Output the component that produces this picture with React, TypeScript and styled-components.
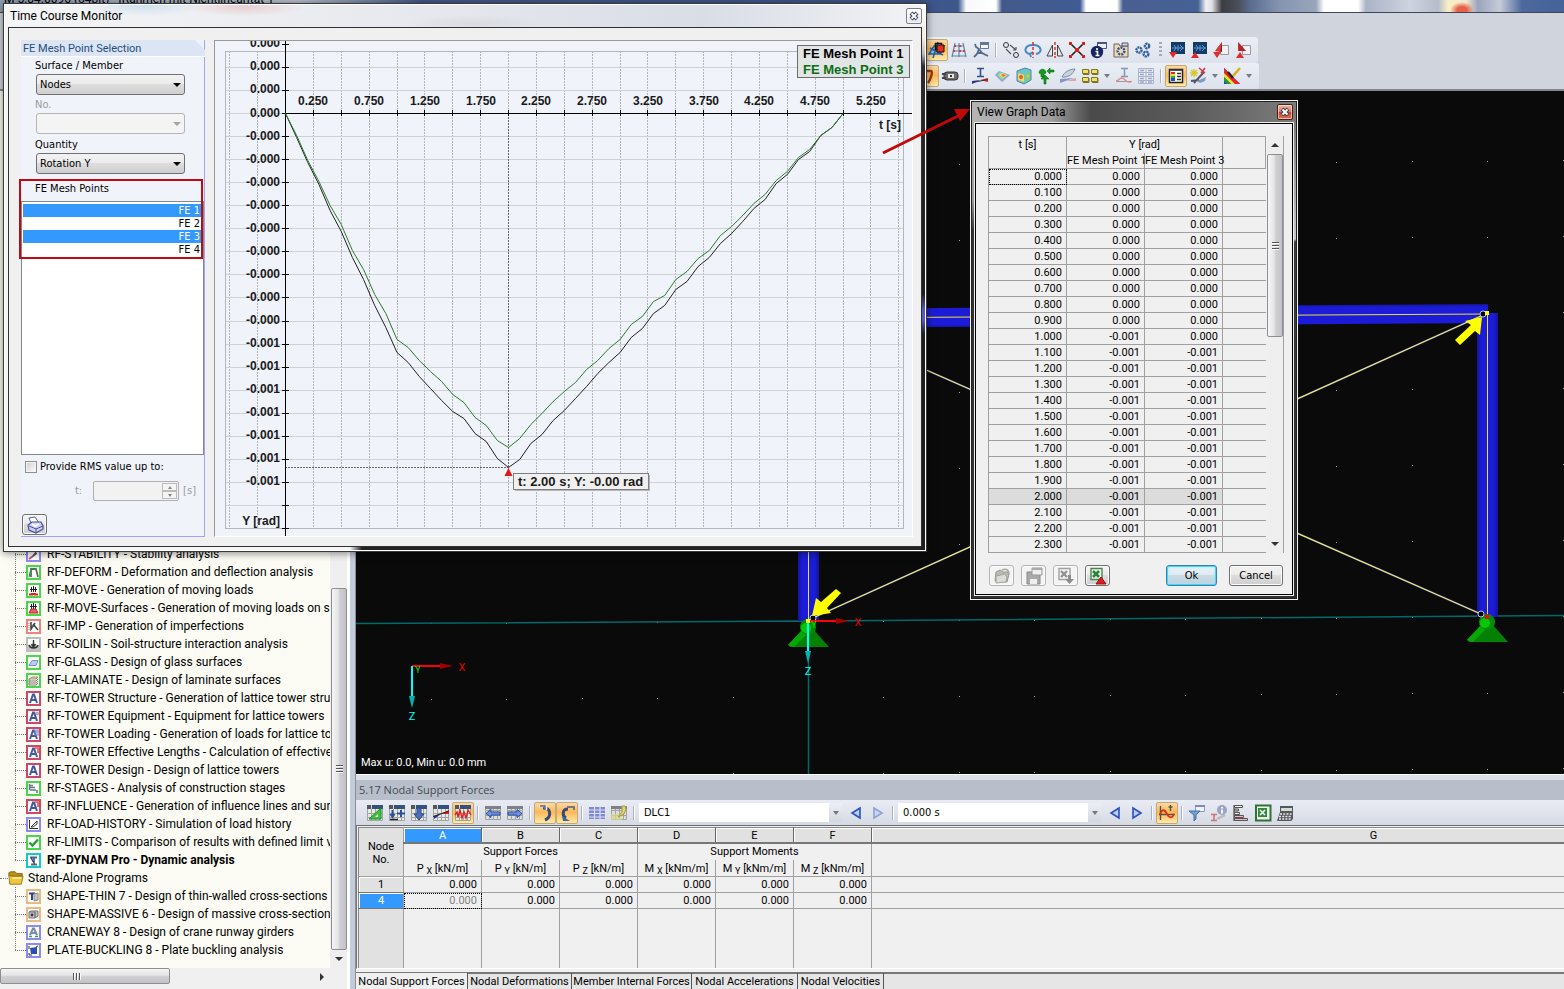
import React from 'react';
import styled, { createGlobalStyle, css } from 'styled-components';

const UI = `Roboto, "Liberation Sans", sans-serif`;
const DIALOG = `"DejaVu Sans Condensed", "Liberation Sans", sans-serif`;
const CHART = `"Liberation Sans", Arial, sans-serif`;

const GlobalStyle = createGlobalStyle`
  * { box-sizing: border-box; }
  body { margin: 0; background: #d0d4dd; overflow: hidden; }
  button, input, select { font: inherit; color: inherit; margin: 0; }
  button { padding: 0; border: 0; background: none; }
`;

/* ---------- shell ---------- */

const Shell = styled.div`
  position: relative;
  display: flex;
  flex-direction: column;
  height: 100vh;
  overflow: hidden;
  font: 12px/18px ${UI};
  color: #000;
  background: #d0d4dd;
`;

const TitleStrip = styled.header`
  flex: none;
  height: 13px;
  overflow: hidden;
  border-bottom: 1px solid #41465a;
  background:
    radial-gradient(ellipse 12px 8px at 1462px 10px, #e8604a 0 40%, transparent 100%),
    linear-gradient(90deg, #8fa0b4 0, #b8c0cc 300px, #44598a 420px, #3d568c 958px, #f8f9fc 966px, #fff 996px, #43598c 1002px,
      #3f5c94 1080px, #fff 1086px, #fff 1117px, #4a5f92 1123px, #456196 1198px, #f0f0f2 1206px, #e0e0e4 1212px, #3c3c40 1222px,
      #4b4f58 1238px, #5a6b90 1250px, #8595b0 1280px, #98a5bc 1316px, #fff 1324px, #fff 1358px, #aab3c6 1366px, #cfd3e0 1410px,
      #b5bccb 1438px, #f6efc4 1448px, #f4e8d0 1466px, #9aa4bc 1478px, #c6cbd8 1500px, #4c689c 1522px, #46639a 1560px);
`;

const AppTitle = styled.h1`
  margin: -10px 0 0 4px;
  font: 12px/18px ${UI};
`;

const ToolArea = styled.div`
  flex: none;
  display: flex;
  flex-direction: column;
  height: 78px;
  padding: 24px 0 0 917px;
  border-bottom: 2px solid #85878a;
`;

const ToolRow = styled.div<{ $lead?: number }>`
  display: flex;
  align-items: center;
  align-self: flex-start;
  height: 26px;
  padding-left: ${p => p.$lead ?? 0}px;
  padding-right: 4px;
  border-radius: 3px;
  background: linear-gradient(#ebeef5, #dce1ec);
`;

const Tool = styled.button<{ $on?: boolean }>`
  flex: none;
  display: flex;
  align-items: center;
  justify-content: center;
  width: 22px;
  height: 22px;
  border: 1px solid transparent;
  ${p => p.$on && css`
    border-color: #c2a978;
    border-radius: 2px;
    background: linear-gradient(#fbd9a5, #fdb85a 45%, #feeaa6);
  `}
`;

const DropArrow = styled.button`
  flex: none;
  width: 12px;
  height: 22px;
  display: flex;
  align-items: center;
  justify-content: center;
  &::after {
    content: '';
    border: 3px solid transparent;
    border-top: 4px solid #777b85;
    border-bottom: 0;
  }
`;

const Sep = styled.i`
  flex: none;
  width: 2px;
  height: 14px;
  margin: 0 3px;
  background: linear-gradient(90deg, #aab0bd 50%, #fff 50%);
`;

const Grip = styled.i`
  flex: none;
  width: 3px;
  height: 16px;
  margin: 0 4px 0 5px;
  background: repeating-linear-gradient(#a3a8b4 0 2px, transparent 2px 4px);
`;

const Body = styled.div`
  flex: 1;
  display: flex;
  min-height: 0;
`;

/* ---------- navigator tree ---------- */

const Navigator = styled.aside`
  flex: none;
  display: grid;
  grid-template: minmax(0, 1fr) 16px / 330px 18px;
  width: 356px;
  padding: 0 0 5px;
  background: linear-gradient(90deg, #f0f0f0 347px, #fff 347px 350px, #c5ccd9 350px 355px, #8a8f99 355px);
`;

const TreePane = styled.nav`
  display: flex;
  flex-direction: column;
  justify-content: flex-end;
  overflow: hidden;
  padding-bottom: 9px;
  background: #fcfcf4;
`;

const Branch = styled.ul`
  position: relative;
  flex: none;
  margin: 0;
  padding: 0 0 0 15px;
  list-style: none;
  &::before {
    content: '';
    position: absolute;
    left: 15px;
    top: 0;
    bottom: 9px;
    border-left: 1px dotted #777;
  }
`;

const Leaf = styled.li<{ $bold?: boolean }>`
  display: flex;
  align-items: center;
  gap: 6px;
  height: 18px;
  white-space: nowrap;
  font-weight: ${p => (p.$bold ? 700 : 400)};
  &::before {
    content: '';
    flex: none;
    width: 11px;
    margin-right: -6px;
    border-top: 1px dotted #777;
  }
`;

const LeafIcon = styled.span<{ $c: string }>`
  flex: none;
  display: flex;
  width: 15px;
  height: 15px;
  border: 2px solid ${p => p.$c};
  background: #fff;
`;

const FolderRow = styled.div`
  flex: none;
  display: flex;
  align-items: center;
  gap: 4px;
  height: 18px;
  &::before {
    content: '';
    width: 8px;
    margin-right: -4px;
    border-top: 1px dotted #777;
  }
`;

const VScroll = styled.div`
  display: flex;
  flex-direction: column;
  justify-content: flex-end;
  width: 16px;
  margin-left: 1px;
  background: #efefef;
`;

const DataScroll = styled(VScroll)`
  flex: none;
  justify-content: flex-start;
`;

const Filler = styled.span`
  flex: 1;
`;

const thumb = css`
  border: 1px solid #8e8e8e;
  border-radius: 2px;
  display: flex;
  align-items: center;
  justify-content: center;
`;

const VThumb = styled.div<{ $h: number }>`
  ${thumb}
  flex: none;
  height: ${p => p.$h}px;
  background: linear-gradient(90deg, #f6f6f6, #e4e4e6 45%, #cfcfd3 55%, #c2c2c8);
  &::after {
    content: '';
    width: 7px;
    height: 8px;
    background: repeating-linear-gradient(#555 0 1px, #fafafa 1px 2px, transparent 2px 3px);
  }
`;

const HScroll = styled.div`
  display: flex;
  align-items: stretch;
  background: #f0f0f0;
`;

const HThumb = styled.div`
  ${thumb}
  width: 170px;
  padding-right: 16px;
  background: linear-gradient(#f6f6f6, #e4e4e6 45%, #cfcfd3 55%, #c2c2c8);
  &::after {
    content: '';
    width: 8px;
    height: 7px;
    background: repeating-linear-gradient(90deg, #555 0 1px, #fafafa 1px 2px, transparent 2px 3px);
  }
`;

const ScrollArrow = styled.button<{ $dir: 'up' | 'down' | 'right' }>`
  flex: none;
  display: flex;
  align-items: center;
  justify-content: center;
  width: 16px;
  height: 18px;
  margin-left: ${p => (p.$dir === 'right' ? 'auto' : '0')};
  &::after {
    content: '';
    border: 4px solid transparent;
    ${p => p.$dir === 'up' && css`border-top: 0; border-bottom-color: #333;`}
    ${p => p.$dir === 'down' && css`border-bottom: 0; border-top-color: #333;`}
    ${p => p.$dir === 'right' && css`border-right: 0; border-left-color: #333;`}
  }
`;

/* ---------- model view ---------- */

const Main = styled.main`
  flex: 1;
  display: flex;
  flex-direction: column;
  min-width: 0;
`;

const ViewPort = styled.section`
  position: relative;
  flex: 1;
  min-height: 0;
  background: #0a0a0a;
`;

const Scene = styled.svg`
  display: block;
  width: 100%;
  height: 100%;
`;

const ViewStatus = styled.p`
  position: absolute;
  left: 5px;
  bottom: 2px;
  margin: 0;
  font: 11px/18px ${UI};
  color: #fff;
`;

/* ---------- results panel ---------- */

const Results = styled.section`
  flex: none;
  display: flex;
  flex-direction: column;
  height: 215px;
  border-top: 1px solid #fff;
  background: #dde0e8;
  padding-top: 5px;
`;

const ResultsTitle = styled.h2`
  margin: 0;
  padding-left: 3px;
  height: 20px;
  font: 11px/20px "Open Sans", sans-serif;
  color: #444b52;
  background: #b9bfca;
`;

const ResultsTools = styled.div`
  flex: none;
  display: flex;
  align-items: center;
  height: 26px;
  padding-left: 8px;
  border-bottom: 1px solid #6c6c6c;
  background: linear-gradient(#e9ecf4, #d6dae4);
`;

const Combo = styled.span`
  position: relative;
  display: flex;
  flex: none;
  width: 203px;
  height: 19px;
  margin: 0 3px 0 1px;
  background: #fff;
  select {
    flex: 1;
    border: 0;
    padding: 0 5px;
    background: transparent;
    appearance: none;
    font: 11px/18px ${DIALOG};
  }
  &::before {
    content: '';
    position: absolute;
    right: 0;
    top: 0;
    width: 13px;
    height: 19px;
    background: linear-gradient(#eceff4, #d3d8e0);
  }
  &::after {
    content: '';
    position: absolute;
    right: 3px;
    top: 8px;
    border: 3px solid transparent;
    border-top: 4px solid #777;
    border-bottom: 0;
  }
`;

const GridWrap = styled.div`
  flex: 1;
  overflow: hidden;
  padding: 1px 0 0 1px;
  background: #f0f0f0;
  border-left: 1px solid #777;
  border-bottom: 1px solid #fff;
`;

const Grid = styled.table`
  table-layout: fixed;
  width: 1518px;
  border-collapse: collapse;
  font: 11px/14px ${UI};
  border-top: 1px solid #888;
  th, td {
    padding: 1px 4px 0;
    height: 16px;
    font-weight: 400;
    border-right: 1px solid #a0a0a0;
    border-bottom: 1px solid #a0a0a0;
    white-space: nowrap;
  }
  td { text-align: right; }
  thead tr:nth-child(2) th { height: 16px; border-bottom-color: transparent; }
  thead tr:nth-child(3) th { height: 17px; }
  tbody tr:last-child td { height: 61px; border-bottom: 0; }
  sub { font-size: 9px; line-height: 9px; vertical-align: -2px; }
`;

const Letter = styled.th<{ $sel?: boolean }>`
  height: 14px !important;
  line-height: 13px;
  border-bottom: 2px solid #777 !important;
  border-right-color: #666 !important;
  box-shadow: inset 1px 1px #fff;
  background: ${p => (p.$sel ? '#3399ff' : '#e1e1e1')};
  color: ${p => (p.$sel ? '#fff' : '#000')};
`;

const Corner = styled.th`
  line-height: 13px;
  background: #e1e1e1;
  border-left: 1px solid #888;
`;

const RowHead = styled.th<{ $sel?: boolean }>`
  box-shadow: inset 1px 1px #fff;
  border-left: 1px solid #888;
  border-bottom-color: #777 !important;
  background: ${p => (p.$sel ? '#3399ff' : '#e1e1e1')};
  color: ${p => (p.$sel ? '#fff' : '#000')};
`;

const EdgeCell = styled.td`
  background: #e1e1e1;
  border-left: 1px solid #888;
`;

const FocusCell = styled.td`
  outline: 1px dotted #000;
  outline-offset: -1px;
  color: #808080;
`;

const Tabs = styled.div`
  flex: none;
  display: flex;
  height: 20px;
  padding-top: 4px;
  background: linear-gradient(#f0f0f0 3px, #777 3px 5px, #e6e6e6 5px);
  font: 11px/18px ${UI};
`;

const Tab = styled.button<{ $on?: boolean; $w: number }>`
  flex: none;
  width: ${p => p.$w}px;
  height: 18px;
  border-right: 1px solid #555;
  background: ${p => (p.$on ? '#f0f0f0' : 'transparent')};
  white-space: nowrap;
`;

/* ---------- time course window ---------- */

const TimeWindow = styled.section`
  position: absolute;
  left: 3px;
  top: 3px;
  width: 924px;
  padding: 0 4px 4px;
  border: 1px solid #3a3a3a;
  background:
    linear-gradient(#fdfdfd, #f3ede2 34px, #bbb 50px, #2c2c2c 62px, #1e1e1e 290px, #5858c0 306px, #5858c0 316px, #1e1e1e 330px) right / 5px 100% no-repeat,
    linear-gradient(90deg, #f6f6f6 346px, #222 358px) left bottom / 100% 5px no-repeat,
    radial-gradient(ellipse 60px 10px at 140px 2px, #cfe0ee, transparent),
    radial-gradient(ellipse 70px 9px at 470px 20px, #d9dbe0, transparent),
    radial-gradient(ellipse 60px 9px at 240px 3px, #e8cfd2, transparent),
    linear-gradient(90deg, #f4f5f6, #e7e9ee 400px, #d9dde6 700px, #f2f3f6);
  box-shadow: inset 0 0 0 1px #fff, 0 1px 8px rgba(0, 0, 0, 0.5);
`;

const WinTitle = styled.header<{ $h: number }>`
  display: flex;
  align-items: center;
  justify-content: space-between;
  height: ${p => p.$h}px;
  padding-left: 2px;
  h2 { margin: 0; font: 12px/18px ${UI}; }
`;

const CloseButton = styled.button<{ $red?: boolean }>`
  display: flex;
  align-items: center;
  justify-content: center;
  width: 16px;
  height: 16px;
  border: 1px solid ${p => (p.$red ? '#4c2018' : '#7d8088')};
  border-radius: 2px;
  background: ${p => (p.$red ? 'linear-gradient(#f0b5a5, #dd7a62 48%, #c5432a 52%, #e0755a)' : 'linear-gradient(#fff, #e4e6ea)')};
  box-shadow: inset 0 0 0 1px rgba(255, 255, 255, 0.5);
`;

const TimeBody = styled.div`
  display: flex;
  gap: 9px;
  height: 520px;
  padding: 12px 8px 9px 12px;
  border: 1px solid #303030;
  background: #f0f0f0;
`;

const SelectionPanel = styled.form`
  position: relative;
  display: flex;
  flex-direction: column;
  width: 184px;
  border-right: 1px solid #a4a4ee;
  border-bottom: 1px solid #a4a4ee;
  background: #f0f3fa;
  font: 11px/14px ${DIALOG};
`;

const PanelTitle = styled.h3`
  margin: 0 -1px 0 0;
  padding-left: 2px;
  height: 17px;
  font: 11px/17px ${UI};
  color: #1f4e80;
  background: #dce5f4;
  border-bottom: 1px solid #fff;
  clip-path: polygon(0 0, 174px 0, 100% 10px, 100% 100%, 0 100%);
`;

const FieldLabel = styled.label<{ $off?: boolean; $top: number }>`
  display: block;
  height: 16px;
  margin: ${p => p.$top}px 0 0 14px;
  line-height: 16px;
  color: ${p => (p.$off ? '#9b9b9b' : '#000')};
`;

const Drop = styled.span<{ $off?: boolean }>`
  position: relative;
  display: flex;
  width: 149px;
  height: 21px;
  margin-left: 15px;
  select {
    flex: 1;
    padding: 0 3px;
    border: 1px solid ${p => (p.$off ? '#b5b5b5' : '#707070')};
    border-radius: 3px;
    appearance: none;
    opacity: 1;
    background: ${p => (p.$off ? '#f4f4f4' : 'linear-gradient(#f2f2f2, #ebebeb 48%, #dddddd 50%, #cfcfcf)')};
  }
  &::after {
    content: '';
    position: absolute;
    right: 4px;
    top: 9px;
    border: 4px solid transparent;
    border-top-color: ${p => (p.$off ? '#a5a5a5' : '#000')};
    border-bottom: 0;
  }
`;

const PointList = styled.ul`
  height: 254px;
  margin: 4px 0 0;
  padding: 2px 1px;
  list-style: none;
  border: 1px solid #828790;
  background: #fff;
  text-align: right;
`;

const PointItem = styled.li<{ $sel?: boolean }>`
  height: 13px;
  padding-right: 2px;
  line-height: 13px;
  background: ${p => (p.$sel ? '#3399ff' : 'transparent')};
  color: ${p => (p.$sel ? '#fff' : '#000')};
`;

const Highlight = styled.div`
  position: absolute;
  left: -2px;
  top: 139px;
  width: 184px;
  height: 80px;
  border: 2px solid #c00a12;
  pointer-events: none;
`;

const CheckLabel = styled.label`
  display: flex;
  align-items: center;
  gap: 3px;
  margin: 5px 0 0 4px;
  input {
    width: 12px;
    height: 12px;
    appearance: none;
    border: 1px solid #8e8f8f;
    background: linear-gradient(135deg, #ccc, #fff);
    box-shadow: inset 0 0 0 1px #f4f4f4;
  }
`;

const SpinRow = styled.div`
  display: flex;
  align-items: center;
  justify-content: flex-end;
  gap: 4px;
  margin: 7px 8px 0 0;
  color: #9b9b9b;
  label { margin-right: 7px; }
`;

const Spin = styled.span`
  display: flex;
  width: 86px;
  height: 20px;
  padding: 1px;
  border: 1px solid #b0b0b0;
  border-radius: 2px;
  background: #f2f2f2;
  input {
    flex: 1;
    min-width: 0;
    border: 0;
    background: transparent;
  }
`;

const SpinButtons = styled.span`
  display: flex;
  flex-direction: column;
  width: 15px;
  button {
    flex: 1;
    display: flex;
    align-items: center;
    justify-content: center;
    border: 1px solid #bbb;
    background: #f4f4f4;
  }
  button::after { content: ''; border: 2px solid transparent; }
  button:first-child::after { border-top: 0; border-bottom: 3px solid #888; }
  button:last-child::after { border-bottom: 0; border-top: 3px solid #888; }
`;

const IconButton = styled.button<{ $off?: boolean }>`
  display: flex;
  align-items: center;
  justify-content: center;
  width: 25px;
  height: 21px;
  border: 1px solid ${p => (p.$off ? '#b4b4b4' : '#707070')};
  border-radius: 3px;
  background: ${p => (p.$off ? '#f4f4f4' : 'linear-gradient(#f4f4f4, #ebebeb 48%, #dcdcdc 50%, #cfcfcf)')};
  box-shadow: inset 0 0 0 1px #fbfbfb;
`;

const PrintSlot = styled.div`
  margin: auto 0 1px 1px;
`;

const ChartFrame = styled.figure`
  flex: 1;
  min-width: 0;
  margin: 0;
  overflow: hidden;
  border-top: 1px solid #999;
  border-left: 1px solid #999;
  border-bottom: 1px solid #fff;
  border-right: 1px solid #fff;
  background: #f0f3fa;
  svg { display: block; }
`;

/* ---------- graph data window ---------- */

const DataWindow = styled.section`
  position: absolute;
  left: 970px;
  top: 100px;
  width: 328px;
  padding: 0 4px 4px;
  border: 1px solid #f2f2f2;
  background:
    linear-gradient(90deg, #b4b4b4, #a0a0a0 80px, #4a4a4a 120px, #5c5c5c 220px, #7c7c7c) top / 100% 22px no-repeat,
    linear-gradient(#7c7c7c 20px, #c8c8c8 138px, #3a3a3a 141px, #2c2c2c) right / 5px 100% no-repeat,
    linear-gradient(#b4b4b4 20px, #9a9a9a 100px, #333 130px) left / 5px 100% no-repeat,
    #333;
  box-shadow: inset 0 0 0 1px #222;
`;

const DataBody = styled.div`
  padding: 12px 8px 8px 12px;
  border: 1px solid #000;
  outline: 1px solid #eee;
  background: #f0f0f0;
`;

const DataArea = styled.div`
  display: flex;
  border-right: 1px solid #a0a0a0;
`;

const DataTable = styled.table`
  flex: 1;
  width: 100%;
  min-width: 0;
  table-layout: fixed;
  border-collapse: collapse;
  border-top: 1px solid #a0a0a0;
  border-left: 1px solid #a0a0a0;
  font: 11px/15px ${UI};
  th, td {
    padding: 0 4px;
    height: 16px;
    font-weight: 400;
    white-space: nowrap;
    border-right: 1px solid #a0a0a0;
    border-bottom: 1px solid #a0a0a0;
  }
  th { padding: 0; }
  th[rowspan] { vertical-align: top; }
  thead tr:first-child th { border-bottom-color: transparent; }
  thead tr:first-child th[rowspan] { border-bottom-color: #a0a0a0; height: 32px; }
  td { text-align: right; }
  td:last-child { border-right: 0; }
`;

const DataRow = styled.tr<{ $hot?: boolean }>`
  td { background: ${p => (p.$hot ? '#dcdcdc' : 'transparent')}; }
  td:last-child { background: transparent; }
  &:first-child td:first-child { outline: 1px dotted #000; outline-offset: -1px; }
`;

const DataButtons = styled.footer`
  display: flex;
  align-items: center;
  gap: 7px;
  margin-top: 12px;
  padding: 0 1px;
  font: 11px/14px ${DIALOG};
`;

const PushButton = styled.button<{ $default?: boolean }>`
  width: ${p => (p.$default ? 51 : 54)}px;
  height: 21px;
  margin-left: ${p => (p.$default ? 'auto' : '5px')};
  border: 1px solid ${p => (p.$default ? '#2f84b3' : '#707070')};
  border-radius: 3px;
  background: linear-gradient(#f2f2f2, #ebebeb 48%, #dddddd 50%, #cfcfcf);
  box-shadow: ${p => (p.$default ? 'inset 0 0 0 1px #4fd0f5, inset 0 0 3px 1px #a8e4fa' : 'inset 0 0 0 1px #fbfbfb')};
  ${p => p.$default && css`background: linear-gradient(#eaf3f8, #dfeaf0 48%, #c9dbe4 50%, #bcd2dd);`}
`;

const Pointer = styled.svg`
  position: absolute;
  left: 880px;
  top: 105px;
  pointer-events: none;
`;

/* ---------- icons ---------- */

const Icon = ({ name, size = 18 }: { name: string; size?: number }) => (
  <svg width={size} height={size} viewBox="0 0 18 18" fill="none" aria-hidden="true">
    {ICONS[name]}
  </svg>
);

const sheet = (
  <>
    <rect x="1" y="1" width="16" height="16" fill="#e8e8e4" />
    <path d="M1.500 5v11.500h15V5M1 9.500h16M1 13.500h16M5.500 5v12M9.500 5v12M13.500 5v12" stroke="#a4a49e" />
    <path d="M1 1h16v4H1z" fill="#34527e" />
    <path d="M1 1h4v4H1z" fill="#55565a" />
    <path d="M5.500 1v4" stroke="#cdd6e4" />
  </>
);
const palSheet = (
  <>
    <rect x="1" y="2" width="16" height="14" fill="#dededa" />
    <path d="M1.500 2.500h15v13h-15zM1 6.500h16M1 11.500h16M5.500 2v14M9.500 2v14M13.500 2v14" stroke="#a2a29e" />
    <path d="M1 2h16v3H1z" fill="#7d8088" />
  </>
);
const screen = (
  <>
    <rect x="3" y="1" width="14" height="12" fill="#143a68" />
    <path d="M6 4l2 3-2 3M10 4v6M12 4l3 3-3 3M4 7h12" stroke="#5aa0d8" />
  </>
);

const ICONS: Record<string, React.ReactNode> = {
  workplane: <><path d="M1 13l5-8h10l-4 8zM10 1L5 17M2 7l13 7" stroke="#27609a" strokeWidth="1.500" fill="#8cbfe0" /><path d="M7.500 2.500h6v6h-6z" stroke="#111" strokeWidth="1.600" /><path d="M9 4h7v7H9z" fill="#e8301f" stroke="#111" /></>,
  mesh: <><path d="M5 2L2 16M9 2v14M13 2l3 14M4 5h10M3 10h12M2 15h14" stroke="#5c88a8" strokeWidth="1.200" /><path d="M4 4h2v2H4zM9 4h2v2H9zM3 9h2v2H3zM9 9h2v2H9zM13 9h2v2h-2z" fill="#d04040" /></>,
  tree: <><path d="M3 3l1 3 3 2-2 5-3 3M7 8l3 4 6 3M5 12l5 0" stroke="#51698e" strokeWidth="1.800" /><path d="M8.500 1.500h8v6h-8z" fill="#f6f6f6" stroke="#66789a" /><path d="M8 1h9v3H8z" fill="#66789a" /></>,
  move: <><circle cx="4" cy="4" r="2.500" stroke="#333" /><circle cx="14" cy="14" r="2.500" stroke="#333" /><path d="M4 8l5 5M8 4l6 5m0 0V6m0 3h-3" stroke="#555" strokeWidth="1.200" /></>,
  rotate: <><path d="M6 13C-1 12 0 4 9 4s10 8 3 9M7 16l-1-3 3-2" stroke="#4b86c4" strokeWidth="2" /><path d="M9 1v3m0 2v3m0 2v3m0 2v1" stroke="#d22" strokeWidth="1.400" /></>,
  mirror: <><path d="M6.500 4v11H1zM11.500 4v11H17z" stroke="#444" /><path d="M9 1v3m0 2v3m0 2v3m0 1v2" stroke="#d22" strokeWidth="1.400" /></>,
  cross: <><path d="M3 3l12 12M15 3L3 15" stroke="#222" strokeWidth="1.600" /><path d="M1 1h3v3H1zM14 1h3v3h-3zM1 14h3v3H1zM14 14h3v3h-3zM7 7h4v4H7z" fill="#d8201c" /></>,
  info: <><path d="M7.500 1.500h9v6h-9z" fill="#eef" stroke="#4a5680" /><path d="M7 1h10v2H7z" fill="#4a5680" /><circle cx="7" cy="11" r="6.200" fill="#17255e" /><path d="M7 7v2M5.500 10.500H7.500v4M5.500 14.500h4" stroke="#fff" strokeWidth="1.600" /></>,
  gearbox: <><path d="M2 3h5l1 2h8v11H2z" fill="#ecd9b8" stroke="#6c6456" /><path d="M10 2h6v3h-6z" fill="#cfd9ea" stroke="#556" /><circle cx="9" cy="10" r="3.400" stroke="#33538e" strokeWidth="2.400" strokeDasharray="2 1" /></>,
  gears: <g stroke="#34609c" strokeWidth="2.400" strokeDasharray="2 .6"><circle cx="5" cy="9" r="2.600" /><circle cx="13" cy="5" r="2.200" /><circle cx="12" cy="13" r="2.400" /></g>,
  scrDown1: <>{screen}<path d="M1 11h8l-4 6z" fill="#e02a2a" /></>,
  scrUp1: <>{screen}<path d="M1 17h8l-4-6z" fill="#e02a2a" /></>,
  redIn: <><path d="M8.500 4.500h8v9h-8z" fill="#f2f2f2" stroke="#99a" /><path d="M10 1v10l-6-2z" fill="#9c1820" /><path d="M10 1L3 10l5 1z" fill="#d83a3a" /><path d="M1 11h8l-4 6z" fill="#d83030" /></>,
  redOut: <><path d="M8.500 4.500h8v9h-8z" fill="#f2f2f2" stroke="#99a" /><path d="M4 1l8 9H4z" fill="#d83a3a" /><path d="M4 1l1 9 7 0z" fill="#9c1820" opacity=".6" /><path d="M2 17h8l-4-6z" fill="#d83030" /></>,
  bend: <><path d="M4 4h8c2 0 0 8-3 12" stroke="#9a3a12" strokeWidth="2.400" /><path d="M5 5v4" stroke="#333" strokeWidth="2" /></>,
  plug: <><rect x="3" y="5" width="14" height="8" rx="3" fill="#6d6d6d" stroke="#333" /><path d="M1 7h4M1 11h4" stroke="#444" strokeWidth="2" /><path d="M7 7h6v4H7z" fill="#e8e8e8" /><path d="M9 8h2v2H9z" fill="#333" /></>,
  section: <><path d="M6 1.500h7M9.500 2v7M6 9.500h7" stroke="#2d5286" strokeWidth="1.600" /><path d="M1 17v-3l8-1z" fill="#2638c0" /><path d="M9 13l8-2v4z" fill="#e02a2a" /><path d="M1 15.500l16-3" stroke="#333" /></>,
  surface: <><path d="M2 8l4-4 11 4-8 7z" fill="#8aa4e0" /><path d="M4 8l3-3 8 3-6 5z" fill="#8fd8a0" /><path d="M6 8l3-2 5 2-4 3z" fill="#f2dc66" /><path d="M8 8l2-1 3 1-3 2z" fill="#e87845" /></>,
  solid: <><path d="M2 4l8-3 6 2v10l-7 4-7-3z" fill="#6cc6c8" stroke="#4d86a8" /><path d="M3 6l6 2v7l-6-2z" fill="#f0d860" /><circle cx="6" cy="10" r="2" fill="#e4582e" /><path d="M10 8l5-3v7l-5 3z" fill="#7bd07c" /><circle cx="13" cy="9" r="1.500" fill="#e8c040" /></>,
  support: <><path d="M2 6c0-5 7-5 7 0L7 7v3H4V7zM10 4l3-3v2h4v2h-4v2zM8 8l4 4H9v5H7v-5H4z" fill="#129a20" stroke="#08700f" strokeWidth=".6" /></>,
  feather: <><path d="M3 10c2-5 8-8 13-8-2 5-6 8-11 8z" fill="#c6d2de" stroke="#7d8c9c" /><path d="M1 12v4l14-5" fill="#8a93c8" /><path d="M8 14l9-3v3z" fill="#e0a0a0" /></>,
  blocks: <g fill="#f2df6c" stroke="#7d7428"><path d="M1.500 2.500h6v4h-6zM10.500 2.500h6v4h-6zM1.500 10.500h6v4h-6zM10.500 10.500h6v4h-6z" /><path d="M2 7.500h6V3M11 7.500h6V3M2 15.500h6V11M11 15.500h6V11" fill="none" /></g>,
  section2: <><path d="M6 1.500h7M9.500 2v7M6 9.500h7" stroke="#7f99b6" strokeWidth="1.500" /><path d="M1 14.500h16" stroke="#999" /><path d="M1 14c3 0 3-3 6-3s3 5 9 4" stroke="#e08a8a" strokeWidth="1.400" /></>,
  cells: <><path d="M1.500 1.500h15v15h-15zM9 1v16M1 5.500h16M1 9.500h16M1 13.500h16" stroke="#a9b2c8" fill="#e8ebf4" /><path d="M3 3.500h4M11 3.500h4M3 7.500h4M11 7.500h4M3 11.500h4M11 11.500h4M3 15h4M11 15h4" stroke="#9aa8cc" strokeWidth="1.600" /></>,
  legend: <><path d="M2.500 2.500h13v13h-13z" fill="#fff" stroke="#222" strokeWidth="1.500" /><path d="M4 5h4v2H4z" fill="#e22" /><path d="M4 7h4v2H4z" fill="#ed2" /><path d="M4 9h4v2H4z" fill="#2b2" /><path d="M4 11h4v3H4z" fill="#24d" /><path d="M2 3h14M10 6.500h4M10 9.500h4M10 12.500h4" stroke="#333" strokeWidth="1.400" /></>,
  wand: <><path d="M5 2v8M1 6h8M2 3l6 6M8 3L2 9" stroke="#d8c830" strokeWidth="1.500" /><path d="M15 5L5 16M2 14l8-1" stroke="#556" strokeWidth="2" /><path d="M10 1l6 5M16 1l-4 5" stroke="#d34" strokeWidth="1.600" /><path d="M8 14l9-4-1 4-5 2z" fill="#7a9cc8" /></>,
  rainbow: <><path d="M1 1v16h16z" fill="#2448d0" /><path d="M1 1l16 16h-5L1 6z" fill="#e22" /><path d="M1 6l11 11H8L1 10z" fill="#f5e02a" /><path d="M1 10l7 7H4l-3-3z" fill="#1c9c34" /><path d="M10 9l7-8" stroke="#d8b020" strokeWidth="2.600" /><path d="M5 5l5 6" stroke="#222" strokeWidth="2.200" /></>,
  gTri: <>{sheet}<path d="M3 15L15 4v11z" fill="#3fc13f" stroke="#1c8c24" /><path d="M9 13l3-3v3z" fill="#e8e8e4" /></>,
  gPlus: <>{sheet}<path d="M4.500 6v7m-2-3l2 3 2-3M9 9.500h8M13 6v7" stroke="#2b4fa0" strokeWidth="2" /><path d="M2 15.500h8" stroke="#222" strokeWidth="1.400" /></>,
  gDown: <>{sheet}<path d="M7 4h4v6h3l-5 6-5-6h3z" fill="#4a72c0" stroke="#2b4480" /></>,
  gLine: <>{sheet}<path d="M2 15v-3l7-2z" fill="#2030b0" /><path d="M9 10l8-4v4z" fill="#d22" /><path d="M1 12.500L17 7" stroke="#222" /></>,
  gWave: <>{sheet}<path d="M1 11l2-3 1 5 2-7 2 8 2-6 2 6 2-8 3 5" stroke="#e0221c" strokeWidth="1.400" /></>,
  gLeft: <>{palSheet}<path d="M2 9.500l5-4v2.500h9v3H7v2.500z" fill="#6f92e0" stroke="#2c4aa4" /></>,
  gRight: <>{palSheet}<path d="M16 9.500l-5-4v2.500H2v3h9v2.500z" fill="#6f92e0" stroke="#2c4aa4" /></>,
  hookR: <><path d="M7 4c8-1 9 9 2 12" stroke="#3a4a78" strokeWidth="3" /><path d="M3 2h7v4" stroke="#e8e8e8" strokeWidth="2.600" /><path d="M4 2h5v4" stroke="#666" strokeWidth="1.400" /></>,
  hookL: <><path d="M10 5c-6 0-6 7-2 9" stroke="#3a4a78" strokeWidth="3" /><path d="M4 12l8 5-7 0z" fill="#3a66b0" /><path d="M9 3h7v3" stroke="#777" strokeWidth="2" /></>,
  gBlue: <><path d="M1 3h16v12H1z" fill="#8088d0" /><path d="M1 6h16M1 9.500h16M1 13h16M6.500 2v14M12 2v14" stroke="#dcdff4" strokeWidth="1.200" /></>,
  gEdit: <>{palSheet}<path d="M1 10h11v6H1z" fill="#d9dc88" opacity=".7" /><path d="M8 13l4-5V2h3l1 3-2 5z" fill="#e2d668" stroke="#a49c50" /></>,
  prev: <path d="M13 4v10L5 9z" fill="#b8cdf4" stroke="#2c50b8" strokeWidth="1.600" />,
  next: <path d="M5 4v10l8-5z" fill="#b8cdf4" stroke="#2c50b8" strokeWidth="1.600" />,
  nextOff: <path d="M5 4v10l8-5z" fill="#c8d6f4" stroke="#8ba2d6" strokeWidth="1.600" />,
  sine: <><path d="M2.500 2v14M1 10.500h16M12.500 1v6M10.500 3h4" stroke="#554" strokeWidth="1.400" /><path d="M2 10c3-6 5-4 7 0s5 5 7 0" stroke="#e0301c" strokeWidth="1.800" /></>,
  funnel: <><path d="M7.500 1.500h9v6h-9z" stroke="#8c9ac0" fill="#eef1f8" /><path d="M7 1h10v2H7z" fill="#7c8ab4" /><path d="M1 7h11L8 11v4l-2 2v-6z" fill="#6f9edc" stroke="#446ea8" /></>,
  link: <><circle cx="12" cy="6" r="5" fill="#9aa4c4" /><path d="M12 3v1.500M12 5.500v4" stroke="#fff" strokeWidth="1.800" /><path d="M4 10.500v6M1 10.500h6M1 16.500h6" stroke="#c77" strokeWidth="1.600" /><path d="M7 15l8-4" stroke="#bbb" strokeWidth="2.400" /></>,
  bars: <><path d="M2 1v16" stroke="#333" /><path d="M2.500 1.500h8v2h-8zM2.500 8.500h5v2h-5z" fill="#dfe" stroke="#555" /><path d="M2.500 5h4v2h-4zM2.500 11.500h9v2h-9zM2.500 14.500h13v2h-13z" fill="#f0b8b8" stroke="#555" /></>,
  excel: <><path d="M2 1.500h14.500v15H2z" fill="#f4faf2" stroke="#2a7434" strokeWidth="2" /><path d="M4 4h9v9H4z" fill="#2f8a3c" /><path d="M6 6l5 5M11 6l-5 5" stroke="#fff" strokeWidth="1.600" /></>,
  calc: <><path d="M4 2h13v13l-2 2H1L4 8z" fill="#55585e" /><path d="M5 4h11v3H5z" fill="#cfe0d0" /><path d="M4 10h12M3 12.500h12M3 15h12" stroke="#e8e8e8" strokeWidth="1.400" strokeDasharray="2 1.200" /></>,
  folder: <><path d="M1 6V3l2-1h5l2 2h6v3H1z" fill="#b98f14" stroke="#856310" /><path d="M1 6l1 10h13l2-9H4z" fill="#ecc63c" stroke="#98741a" /><path d="M5 9h10" stroke="#fbe994" strokeWidth="2" /></>,
  openOff: <><path d="M2 14l1-9 4-2 3 2h4l2 2-2 8z" fill="#bcbcb6" stroke="#96968f" /><path d="M3 9l9-2 2 3-1 5-10 1z" fill="#dcdcd6" stroke="#a2a29c" /><path d="M9 3c4-2 7 0 7 4" stroke="#a8a8a2" strokeWidth="1.600" /></>,
  saveOff: <><path d="M2 5h13v12H2z" fill="#aaa" stroke="#888" /><path d="M5 12h7v5H5z" fill="#eee" /><path d="M7 1h10v7H7z" fill="#eee" stroke="#999" /><path d="M7 1h10v2H7z" fill="#aaa" /></>,
  excelOff: <><path d="M2 1.500h11v11H2z" fill="#f4f4f4" stroke="#a0a0a0" strokeWidth="1.400" /><path d="M4 4l6 6M10 4l-6 6" stroke="#909090" strokeWidth="2.400" /><path d="M11 8v4H8l4.500 5 4.500-5h-3V8z" fill="#8c8c8c" /></>,
  excelUp: <><path d="M2 1.500h11v11H2z" fill="#f2faf0" stroke="#4a8452" strokeWidth="1.400" /><path d="M4 4l6 6M10 4l-6 6" stroke="#2a8438" strokeWidth="2.600" /><path d="M12 10l5 7H7z" fill="#e0201c" stroke="#901018" /></>,
  printer: <><path d="M5 7L3 2l6-1 4 6z" fill="#fff" stroke="#5060a0" /><path d="M2 9l4-3 9 0 2 4v3l-7 4-7-3z" fill="#cfd2ee" stroke="#4a4f94" strokeWidth="1.200" /><path d="M3 10l7 3 7-3M10 13v3" stroke="#4a4f94" /><path d="M6 8l3 2 4-2" stroke="#fff" strokeWidth="1.600" /></>,
};

const CloseGlyph = () => (
  <svg width="10" height="10" viewBox="0 0 10 10" aria-hidden="true">
    <path d="M2 2l6 6M8 2L2 8" stroke="#3f4656" strokeWidth="4" />
    <path d="M2.500 2.500l5 5M7.500 2.500l-5 5" stroke="#fff" strokeWidth="1.800" />
  </svg>
);

type Glyph = 'stab' | 'deform' | 'move' | 'moves' | 'imp' | 'soil' | 'glass' | 'lam' | 'A' | 'Ax' | 'Ab' | 'Ar' | 'stages' | 'hist' | 'ok' | 'dyn' | 'thin' | 'mass' | 'crane' | 'plate';

const towerA = <path d="M2 10L5 1.500h1L9 10M3 7h5" stroke="#44599a" strokeWidth="2" />;
const GLYPHS: Record<Glyph, React.ReactNode> = {
  stab: <><path d="M1 10l4-3" stroke="#c55" strokeWidth="2" /><path d="M4 7l4-5 1 3-4 3z" fill="#556" /></>,
  deform: <><path d="M3 10V2h5l2 8" stroke="#666" strokeWidth="1.800" /><path d="M1 10l2-8M4 1.500l5 1" stroke="#293" strokeWidth="1.200" /></>,
  move: <><path d="M5.500 1v6M2 4.500h7M3.500 2v5M7.500 2v5" stroke="#222" /><path d="M1 9.500h3V8M10 9.500H7V8M4 9h3" stroke="#d22" strokeWidth="1.800" /></>,
  moves: <><path d="M5.500 0v6M2 3.500h7M3.500 1v5M7.500 1v5" stroke="#222" /><path d="M1 10l2-4h5l2 4z" fill="#d66" stroke="#b22" /></>,
  imp: <><path d="M3 1v7l4-6M5 3l5 6" stroke="#444" strokeWidth="1.600" /><path d="M1 2v7" stroke="#d55" strokeDasharray="1 1" /></>,
  soil: <><path d="M0 6h11v5H0z" fill="#c4c4c4" /><path d="M5.500 1v6M3.500 5l2 3 2-3M1 6c1 4 8 4 9 0" stroke="#333" strokeWidth="1.400" /></>,
  glass: <path d="M1 8.500l3-5h6l-2 5z" fill="#b8d0ee" stroke="#7a90b8" />,
  lam: <><path d="M1 4l3-2h6L8 4z" fill="#f2cc68" stroke="#997" /><path d="M1 6h7l2-2M1 8h7l2-2M1 10h7l2-2M1 4v6" stroke="#776" /></>,
  A: towerA,
  Ax: <>{towerA}<circle cx="9" cy="2.500" r="1.500" fill="#bbb" stroke="#777" strokeWidth=".6" /></>,
  Ab: <>{towerA}<path d="M7 1h4v5H7zM9 1v5M7 3h4" stroke="#7c8ed0" /></>,
  Ar: <>{towerA}<path d="M7 1h3v5" stroke="#e05040" strokeWidth="1.600" /></>,
  stages: <path d="M1.500 1v6M1 2.500h4M2 4.500h5M2 7h6M9 7v3" stroke="#678" strokeWidth="1.500" />,
  hist: <path d="M1.500 1v8.500H10M3 8l6-6v3L5 8z" stroke="#333" />,
  ok: <path d="M1.500 5.500L4.500 8.500 10 2.500" stroke="#1fa32a" strokeWidth="2.400" />,
  dyn: <><path d="M2 2.500h7M6 2v7M3 9.500h6" stroke="#567" strokeWidth="1.800" /><path d="M3 3c2 1 0 3 3 4" stroke="#339" strokeWidth="1.400" /></>,
  thin: <><path d="M1 2.500h6M4 3v6" stroke="#347" strokeWidth="2" /><path d="M6 3l4-1v7l-4 1z" fill="#c5c5c5" stroke="#888" /></>,
  mass: <><path d="M1 3h6v6H1zM1 3l2-1h7v5L7 9V3" fill="#c4c4c4" stroke="#777" /><circle cx="4" cy="6" r="1.400" fill="#335" /></>,
  crane: <><path d="M2 8L5 1.500h1L9 8M3.500 6h4" stroke="#7a8aa0" strokeWidth="2" /><path d="M1 9.500h3M7 9.500h3" stroke="#2a5" strokeWidth="1.600" /></>,
  plate: <><path d="M2 3l7-1v7l-6 0z" fill="#2c50b0" /><path d="M1 1v3M1 8v2h3M10 1L8 2" stroke="#334" /></>,
};

const LEAVES: [string, string, Glyph][] = [
  ['RF-STABILITY - Stability analysis', '#8b8bf4', 'stab'],
  ['RF-DEFORM - Deformation and deflection analysis', '#4ad64a', 'deform'],
  ['RF-MOVE - Generation of moving loads', '#4ad64a', 'move'],
  ['RF-MOVE-Surfaces - Generation of moving loads on surfaces', '#4ad64a', 'moves'],
  ['RF-IMP - Generation of imperfections', '#f58080', 'imp'],
  ['RF-SOILIN - Soil-structure interaction analysis', '#bcbcbc', 'soil'],
  ['RF-GLASS - Design of glass surfaces', '#4ad64a', 'glass'],
  ['RF-LAMINATE - Design of laminate surfaces', '#4ad64a', 'lam'],
  ['RF-TOWER Structure - Generation of lattice tower structures', '#cc4866', 'A'],
  ['RF-TOWER Equipment - Equipment for lattice towers', '#cc4866', 'Ax'],
  ['RF-TOWER Loading - Generation of loads for lattice towers', '#cc4866', 'Ab'],
  ['RF-TOWER Effective Lengths - Calculation of effective lengths', '#cc4866', 'Ar'],
  ['RF-TOWER Design - Design of lattice towers', '#cc4866', 'A'],
  ['RF-STAGES - Analysis of construction stages', '#4ad64a', 'stages'],
  ['RF-INFLUENCE - Generation of influence lines and surfaces', '#cc4866', 'Ar'],
  ['RF-LOAD-HISTORY - Simulation of load history', '#8b8bf4', 'hist'],
  ['RF-LIMITS - Comparison of results with defined limit values', '#4ad64a', 'ok'],
  ['RF-DYNAM Pro - Dynamic analysis', '#10cccc', 'dyn'],
];
const PROGRAMS: [string, string, Glyph][] = [
  ['SHAPE-THIN 7 - Design of thin-walled cross-sections', '#e8ba88', 'thin'],
  ['SHAPE-MASSIVE 6 - Design of massive cross-sections', '#e8ba88', 'mass'],
  ['CRANEWAY 8 - Design of crane runway girders', '#8b8bf4', 'crane'],
  ['PLATE-BUCKLING 8 - Plate buckling analysis', '#8b8bf4', 'plate'],
];

const Leaves = ({ items }: { items: [string, string, Glyph][] }) => (
  <Branch>
    {items.map(([text, color, glyph]) => (
      <Leaf key={text} $bold={text.startsWith('RF-DYNAM')}>
        <LeafIcon $c={color}>
          <svg width="11" height="11" viewBox="0 0 11 11" fill="none" aria-hidden="true">{GLYPHS[glyph]}</svg>
        </LeafIcon>
        {text}
      </Leaf>
    ))}
  </Branch>
);

/* ---------- chart ---------- */

const X0 = 285.5;
const Y0 = 113.5;
const STEP_X = 27.88;
const STEP_Y = 23.06;
const POINT_1 = [113, 137, 162, 184, 210, 231, 257, 279, 305, 327, 352, 362, 376, 388, 400, 411, 418, 433, 441, 458, 467,
  459, 443, 434, 420, 410, 398, 386, 373, 362, 352, 337, 328, 313, 305, 289, 281, 266, 257, 243, 233, 221, 208, 199, 183, 174, 159, 151, 135, 127, 113];
const POINT_3 = [113, 135, 160, 181, 205, 224, 250, 269, 294, 313, 339, 347, 360, 371, 381, 394, 402, 417, 425, 440, 447,
  438, 424, 413, 401, 391, 382, 369, 360, 348, 339, 324, 316, 301, 295, 279, 271, 258, 250, 235, 226, 215, 203, 194, 180, 171, 157, 149, 135, 127, 113];
const toPoints = (ys: number[]) => ys.map((y, i) => `${X0 + i * 11.152},${y + 0.5}`).join(' ');
const snap = (n: number) => Math.round(n - 0.5) + 0.5;

const Chart = () => (
  <svg width="697" height="496" viewBox="215 41 697 496" role="img" aria-label="Rotation Y over time" fontFamily={CHART} fontWeight="700" fontSize="12" fill="#1a1a1a">
    {Array.from({ length: 25 }, (_, i) => snap(X0 + (i - 2) * STEP_X)).map(x => (
      <path key={x} d={`M${x} 51V528`} stroke="#b3b6b8" strokeDasharray="2 1" />
    ))}
    {Array.from({ length: 21 }, (_, i) => snap(Y0 + (i - 2) * STEP_Y)).map(y => (
      <path key={y} d={`M225 ${y}H903`} stroke="#cfd2d4" />
    ))}
    <rect x="225.5" y="51.5" width="678" height="477" fill="none" stroke="#b4b7ba" />
    <path d="M508.500 114V467M285 467.500H508" stroke="#666" strokeDasharray="2 1" />
    <path d={`M${X0} 41V537M285 ${Y0}H912`} stroke="#000" />
    {Array.from({ length: 22 }, (_, i) => snap(Y0 + (i - 3) * STEP_Y)).map(y => (
      <path key={y} d={`M282 ${y}h7`} stroke="#000" />
    ))}
    {Array.from({ length: 22 }, (_, i) => snap(X0 + (i + 1) * STEP_X)).map(x => (
      <path key={x} d={`M${x} 110v6`} stroke="#000" />
    ))}
    {Array.from({ length: 20 }, (_, i) => (
      <text key={i} x="280" y={Math.round(Y0 + (i - 3) * STEP_Y) + 3} textAnchor="end">
        {i < 4 ? '0.000' : i < 13 ? '-0.000' : '-0.001'}
      </text>
    ))}
    {Array.from({ length: 11 }, (_, i) => (
      <text key={i} x={Math.round(X0 + (1 + 2 * i) * STEP_X)} y="105" textAnchor="middle">{(0.25 + i * 0.5).toFixed(3)}</text>
    ))}
    <polyline points={toPoints(POINT_1)} fill="none" stroke="#222" />
    <polyline points={toPoints(POINT_3)} fill="none" stroke="#2a7d2a" />
    <text x="901" y="129" textAnchor="end">t [s]</text>
    <text x="280" y="525" textAnchor="end">Y [rad]</text>
    <rect x="797.5" y="45.5" width="112" height="32" fill="#e2e5e6" stroke="#6a6d6d" />
    <g fontSize="13">
      <text x="803" y="58" fill="#000">FE Mesh Point 1</text>
      <text x="803" y="74" fill="#0c6c14">FE Mesh Point 3</text>
      <rect x="515" y="475" width="135" height="16" fill="#b4b6ba" />
      <rect x="513.5" y="473.5" width="135" height="16" fill="#f0f0f0" stroke="#808080" />
      <text x="518" y="486">t: 2.00 s; Y: -0.00 rad</text>
    </g>
    <path d="M508.500 468l4 8h-8z" fill="#e01818" />
  </svg>
);

/* ---------- model scene ---------- */

const dots = Array.from({ length: 9 }, (_, r) => Array.from({ length: 17 }, (_, c) => {
  const x = Math.round(808 + (c - 6) * 75.45);
  return [x, Math.round(621 + (r - 6) * 76 - (x - 808) * 0.0066)];
})).flat();

const Support = ({ x, y }: { x: number; y: number }) => (
  <g transform={`translate(${x} ${y})`}>
    <path d="M-20 22L-4 5 4 5 21 24H-18z" fill="#048004" />
    <path d="M-20 22L-4 5 2 8-14 24z" fill="#06a806" />
    <circle r="8" cx="0" cy="4" fill="#048c08" />
    <circle r="5" cx="-2" cy="5" fill="#04c808" />
  </g>
);

const Model = () => (
  <Scene aria-hidden="true">
    <defs>
      <linearGradient id="col"><stop offset="0" stopColor="#14149a" /><stop offset=".2" stopColor="#1c1cd8" /><stop offset=".8" stopColor="#1c1cd8" /><stop offset="1" stopColor="#14149a" /></linearGradient>
      <linearGradient id="row" x2="0" y2="1"><stop offset="0" stopColor="#14149a" /><stop offset=".15" stopColor="#1c1cd8" /><stop offset=".85" stopColor="#1c1cd8" /><stop offset="1" stopColor="#14149a" /></linearGradient>
    </defs>
    <g transform="translate(-356 -91)" fontFamily={UI} fontSize="11" textAnchor="middle">
      {dots.map(([x, y]) => <rect key={`${x}-${y}`} x={x} y={y} width="1" height="1" fill="#9fb09f" />)}
      <path d="M356 623.500L808 621 1564 615.500M808.500 621V775" stroke="#006a6a" strokeWidth="1.500" fill="none" />
      <path d="M797 309L1488 304V323L797 328z" fill="url(#row)" />
      <rect x="798" y="316" width="21" height="305" fill="url(#col)" />
      <rect x="1477" y="313" width="21" height="304" fill="url(#col)" />
      <path d="M808.500 318V621M1487.500 314V616M808 318L1487 314" stroke="#e8e040" fill="none" />
      <g fill="none"><path d="M815 617L1483 315M808 318L1481 614" stroke="#26269a" strokeWidth="2" /><path d="M815 617L1483 315M808 318L1481 614" stroke="#f4f060" strokeWidth="1.300" /></g>
      <Support x={808} y={623} />
      <Support x={1487} y={618} />
      <circle cx="813" cy="618" r="3" stroke="#a9c4f0" fill="#000" />
      <circle cx="1481" cy="614" r="3" stroke="#a9c4f0" fill="#000" />
      <circle cx="1483" cy="314" r="3" stroke="#a9c4f0" fill="#000" />
      <rect x="1485" y="311" width="4" height="4" fill="#ff0" />
      <rect x="1485" y="615" width="4" height="4" fill="#f00" />
      <path d="M812 616l4-18 5 4 15-13 5 4-14 15 4 5z" fill="#ff0" />
      <path d="M1482 317l-17 4 6 4-16 15 5 5 15-14 5 4z" fill="#ff0" />
      {[[808, 621], [412, 666]].map(([x, y]) => (
        <g key={x} transform={`translate(${x} ${y})`}>
          <path d="M0 0h30" stroke="#f00" strokeWidth="2" /><path d="M28-3l13 3-13 3z" fill="#a00000" />
          <path d="M0 0v32" stroke="#0ff" strokeWidth="2" /><path d="M-3 30h6l-3 12z" fill="#00b4b4" />
          <text x="50" y="5" fill="#e00000">X</text>
          <text x="6" y="7" fontSize="9" fill="#00e000">Y</text>
          <text x="0" y="54" fill="#0ff">Z</text>
        </g>
      ))}
      <rect x="806" y="619" width="4" height="4" fill="#ff0" />
    </g>
  </Scene>
);

/* ---------- assembly ---------- */

const Tools = ({ names, on = [] }: { names: string[]; on?: string[] }) => (
  <>
    {names.map((n, i) => {
      if (n === '|') return <Sep key={i} />;
      if (n === ':') return <Grip key={i} />;
      if (n === 'v') return <DropArrow key={i} type="button" aria-label="More" />;
      return <Tool key={i} type="button" aria-label={n} $on={on.includes(n)}><Icon name={n} /></Tool>;
    })}
  </>
);

const COLUMNS: [string, string, string][] = [
  ['P', 'X', '[kN/m]'], ['P', 'Y', '[kN/m]'], ['P', 'Z', '[kN/m]'],
  ['M', 'X', '[kNm/m]'], ['M', 'Y', '[kNm/m]'], ['M', 'Z', '[kNm/m]'],
];

const TABS: [string, number][] = [
  ['Nodal Support Forces', 112], ['Nodal Deformations', 104], ['Member Internal Forces', 120], ['Nodal Accelerations', 106], ['Nodal Velocities', 86],
];

export default function App() {
  return (
    <Shell>
      <GlobalStyle />
      <TitleStrip><AppTitle>M 5.04.0096 (64bit) - [Rahmen mit Nichtlinearität*]</AppTitle></TitleStrip>
      <ToolArea>
        <ToolRow $lead={9}>
          <Tools on={['workplane']} names={['workplane', 'mesh', 'tree', '|', 'move', 'rotate', 'mirror', 'cross', 'info', 'gearbox', 'gears', ':', 'scrDown1', 'scrUp1', 'redIn', 'redOut']} />
        </ToolRow>
        <ToolRow>
          <Tools on={['bend', 'legend']} names={['bend', 'plug', '|', 'section', 'surface', 'solid', 'support', 'feather', 'blocks', 'v', 'section2', 'cells', '|', 'legend', 'wand', 'v', 'rainbow', 'v']} />
        </ToolRow>
      </ToolArea>

      <Body>
        <Navigator>
          <TreePane>
            <Leaves items={LEAVES} />
            <FolderRow><Icon name="folder" size={16} />Stand-Alone Programs</FolderRow>
            <Leaves items={PROGRAMS} />
          </TreePane>
          <VScroll><VThumb $h={362} /><ScrollArrow $dir="down" type="button" aria-label="Scroll down" /></VScroll>
          <HScroll><HThumb /><ScrollArrow $dir="right" type="button" aria-label="Scroll right" /></HScroll>
        </Navigator>

        <Main>
          <ViewPort>
            <Model />
            <ViewStatus>Max u: 0.0, Min u: 0.0 mm</ViewStatus>
          </ViewPort>

          <Results>
            <ResultsTitle>5.17 Nodal Support Forces</ResultsTitle>
            <ResultsTools>
              <Tools on={['gWave', 'hookR', 'hookL']} names={['gTri', 'gPlus', 'gDown', 'gLine', 'gWave', '|', 'gLeft', 'gRight', '|', 'hookR', 'hookL', '|', 'gBlue', 'gEdit', '|']} />
              <Combo><select aria-label="Load case"><option>DLC1</option></select></Combo>
              <Tools names={['prev', 'nextOff', '|']} />
              <Combo><select aria-label="Time step"><option>0.000 s</option></select></Combo>
              <Tools on={['sine']} names={['prev', 'next', '|', 'sine', '|', 'funnel', 'link', 'bars', 'excel', 'calc']} />
            </ResultsTools>
            <GridWrap>
              <Grid>
                <colgroup>
                  <col width="45" />
                  {COLUMNS.map((_, i) => <col key={i} width="78" />)}
                  <col />
                </colgroup>
                <thead>
                  <tr>
                    <Corner rowSpan={3}>Node<br />No.</Corner>
                    {'ABCDEFG'.split('').map(l => <Letter key={l} $sel={l === 'A'}>{l}</Letter>)}
                  </tr>
                  <tr>
                    <th colSpan={3}>Support Forces</th>
                    <th colSpan={3}>Support Moments</th>
                    <th />
                  </tr>
                  <tr>
                    {COLUMNS.map(([a, b, u]) => <th key={a + b}>{a} <sub>{b}</sub> {u}</th>)}
                    <th />
                  </tr>
                </thead>
                <tbody>
                  {['1', '4'].map(n => (
                    <tr key={n}>
                      <RowHead $sel={n === '4'}>{n}</RowHead>
                      {COLUMNS.map(([a, b], i) => (n === '4' && i === 0
                        ? <FocusCell key={a + b}>0.000</FocusCell>
                        : <td key={a + b}>0.000</td>))}
                      <td />
                    </tr>
                  ))}
                  <tr><EdgeCell />{Array.from({ length: 7 }, (_, i) => <td key={i} />)}</tr>
                </tbody>
              </Grid>
            </GridWrap>
            <Tabs role="tablist">
              {TABS.map(([t, w], i) => <Tab key={t} type="button" role="tab" $w={w} $on={i === 0}>{t}</Tab>)}
            </Tabs>
          </Results>
        </Main>
      </Body>

      <TimeWindow>
        <WinTitle $h={23}>
          <h2>Time Course Monitor</h2>
          <CloseButton type="button" aria-label="Close"><CloseGlyph /></CloseButton>
        </WinTitle>
        <TimeBody>
          <SelectionPanel>
            <PanelTitle>FE Mesh Point Selection</PanelTitle>
            <FieldLabel htmlFor="surface" $top={1}>Surface / Member</FieldLabel>
            <Drop><select id="surface"><option>Nodes</option></select></Drop>
            <FieldLabel htmlFor="no" $off $top={2}>No.</FieldLabel>
            <Drop $off><select id="no" disabled><option></option></select></Drop>
            <FieldLabel htmlFor="quantity" $top={3}>Quantity</FieldLabel>
            <Drop><select id="quantity"><option>Rotation Y</option></select></Drop>
            <FieldLabel as="span" id="points" $top={7}>FE Mesh Points</FieldLabel>
            <PointList role="listbox" aria-multiselectable aria-labelledby="points">
              {[1, 2, 3, 4].map(n => <PointItem key={n} role="option" aria-selected={n % 2 === 1} $sel={n % 2 === 1}>FE {n}</PointItem>)}
            </PointList>
            <CheckLabel><input type="checkbox" />Provide RMS value up to:</CheckLabel>
            <SpinRow>
              <label htmlFor="rms">t:</label>
              <Spin>
                <input id="rms" type="text" disabled />
                <SpinButtons><button type="button" disabled aria-label="Increase" /><button type="button" disabled aria-label="Decrease" /></SpinButtons>
              </Spin>
              [s]
            </SpinRow>
            <PrintSlot><IconButton type="button" aria-label="Print"><Icon name="printer" /></IconButton></PrintSlot>
            <Highlight />
          </SelectionPanel>
          <ChartFrame><Chart /></ChartFrame>
        </TimeBody>
      </TimeWindow>

      <DataWindow>
        <WinTitle $h={22}>
          <h2>View Graph Data</h2>
          <CloseButton $red type="button" aria-label="Close"><CloseGlyph /></CloseButton>
        </WinTitle>
        <DataBody>
          <DataArea>
            <DataTable>
              <colgroup><col width="78" /><col width="78" /><col width="78" /><col /></colgroup>
              <thead>
                <tr><th rowSpan={2}>t [s]</th><th colSpan={2}>Y [rad]</th><th rowSpan={2} /></tr>
                <tr><th>FE Mesh Point 1</th><th>FE Mesh Point 3</th></tr>
              </thead>
              <tbody>
                {Array.from({ length: 24 }, (_, i) => (
                  <DataRow key={i} $hot={i === 20}>
                    <td>{(i / 10).toFixed(3)}</td>
                    <td>{i < 10 ? '0.000' : '-0.001'}</td>
                    <td>{i < 11 ? '0.000' : '-0.001'}</td>
                    <td />
                  </DataRow>
                ))}
              </tbody>
            </DataTable>
            <DataScroll>
              <ScrollArrow $dir="up" type="button" aria-label="Scroll up" />
              <VThumb $h={183} />
              <Filler />
              <ScrollArrow $dir="down" type="button" aria-label="Scroll down" />
            </DataScroll>
          </DataArea>
          <DataButtons>
            <IconButton $off disabled type="button" aria-label="Open"><Icon name="openOff" /></IconButton>
            <IconButton $off disabled type="button" aria-label="Save"><Icon name="saveOff" /></IconButton>
            <IconButton $off disabled type="button" aria-label="Import from Excel"><Icon name="excelOff" /></IconButton>
            <IconButton type="button" aria-label="Export to Excel"><Icon name="excelUp" /></IconButton>
            <PushButton $default type="button">Ok</PushButton>
            <PushButton type="button">Cancel</PushButton>
          </DataButtons>
        </DataBody>
      </DataWindow>

      <Pointer width="92" height="52" viewBox="880 105 92 52" aria-hidden="true">
        <path d="M883 153L958 116" stroke="#c00a0a" strokeWidth="3" />
        <path d="M970 109l-16 0 6 12z" fill="#c00a0a" />
      </Pointer>
    </Shell>
  );
}
